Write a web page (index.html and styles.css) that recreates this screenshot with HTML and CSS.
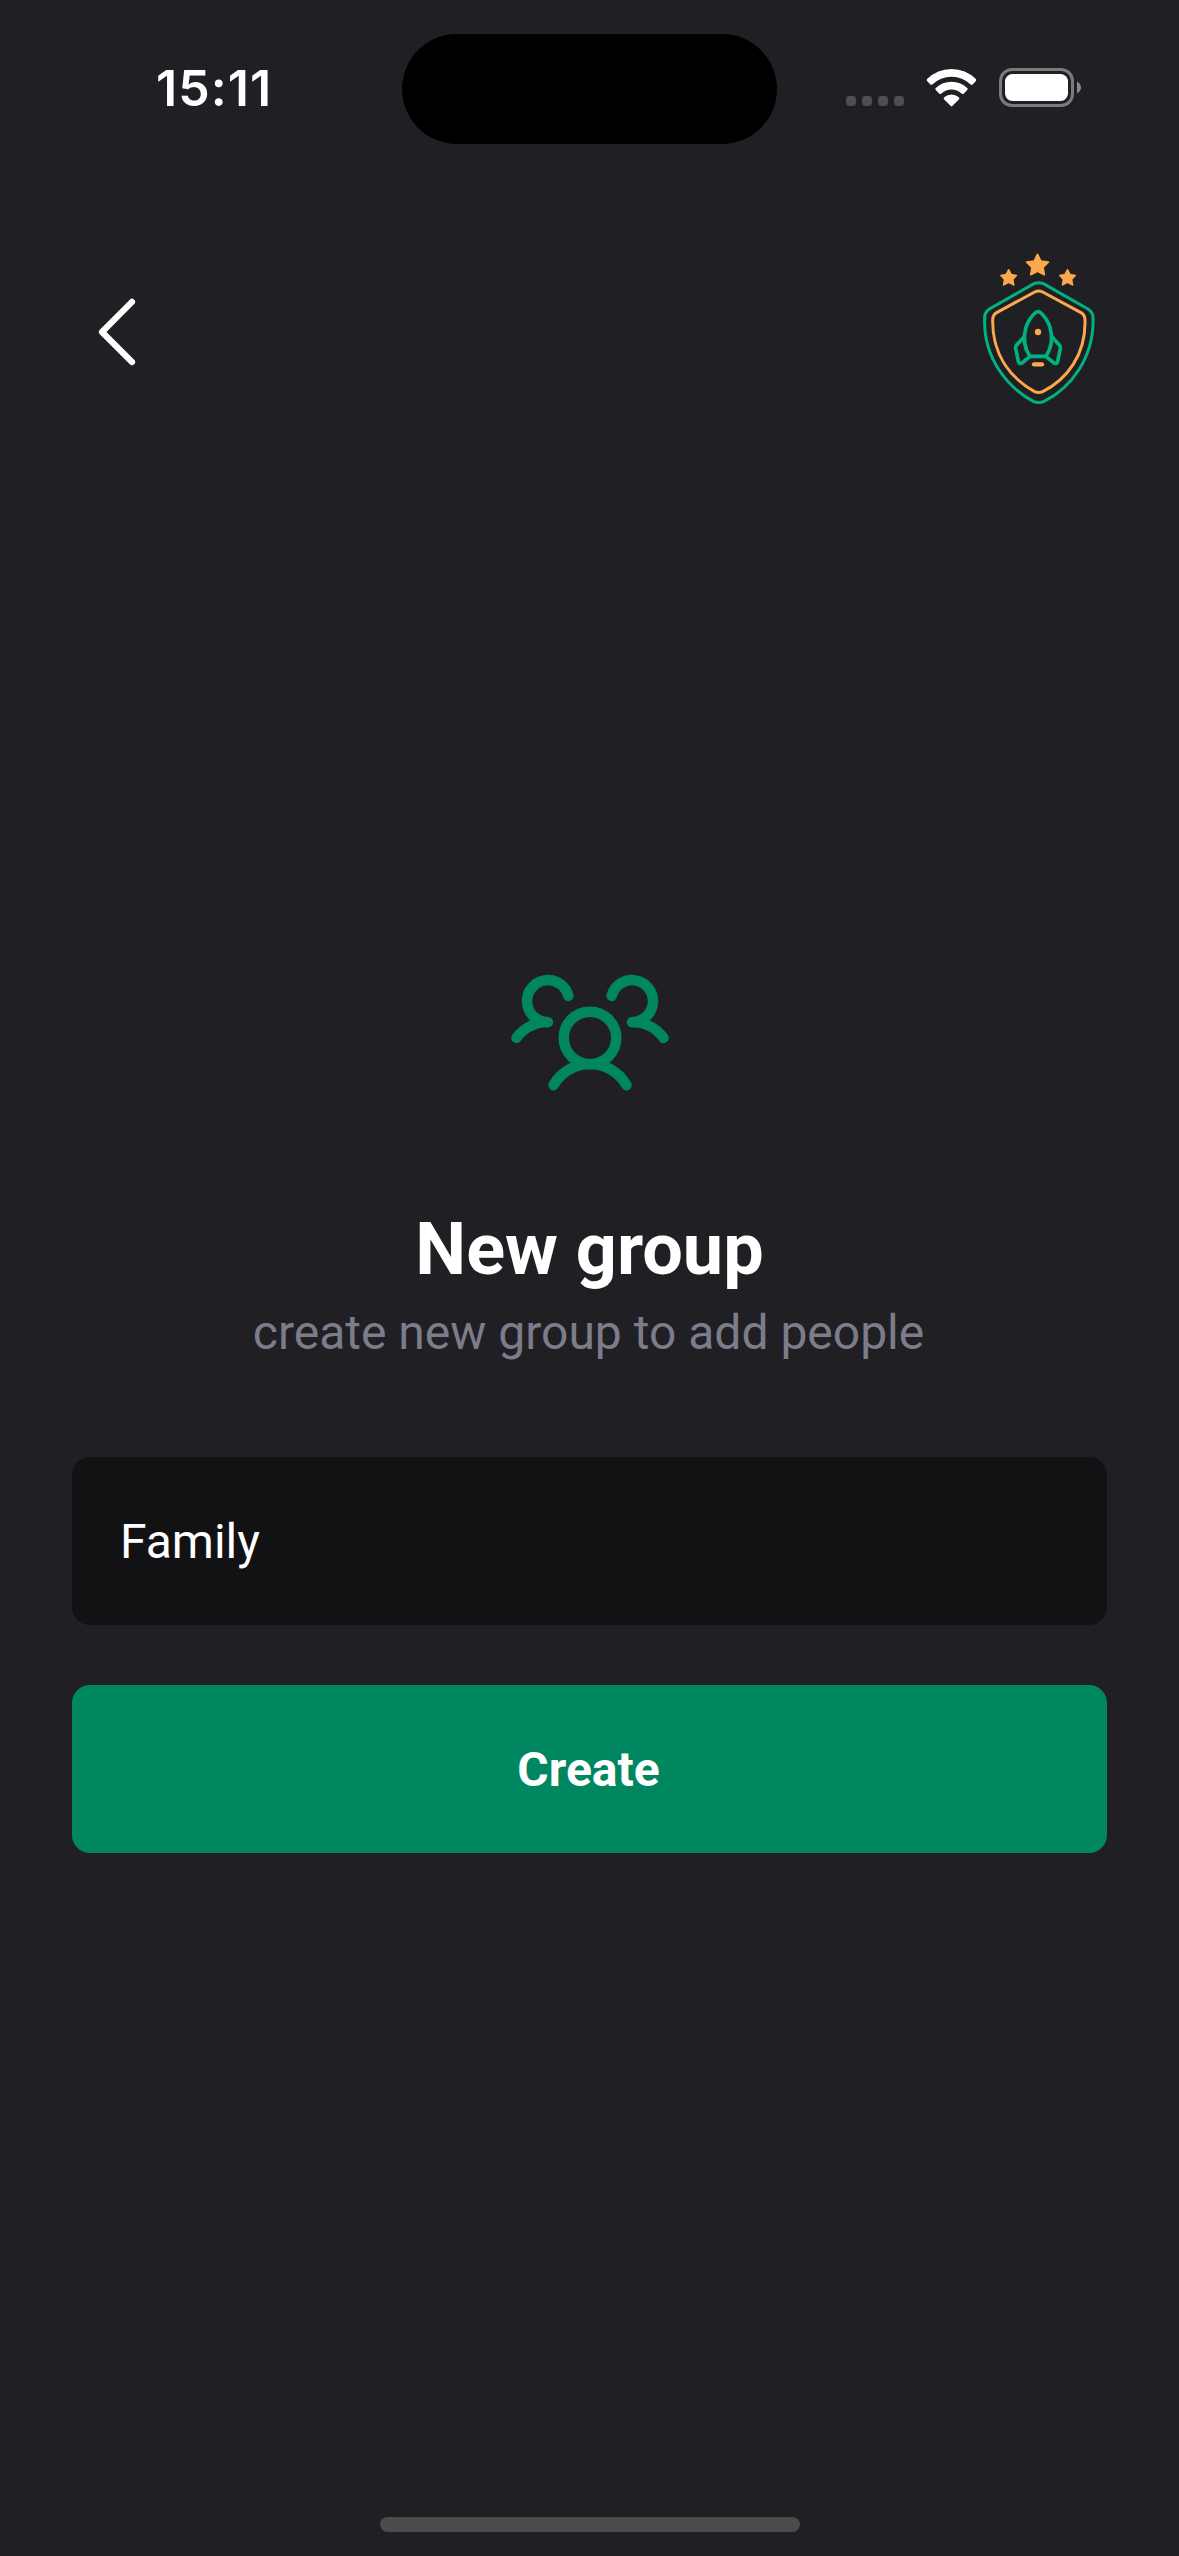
FILE: index.html
```html
<!DOCTYPE html>
<html lang="en">
<head>
<meta charset="utf-8">
<title>New group</title>
<link rel="stylesheet" href="styles.css">
</head>
<body>
<div class="screen">
  <div class="status">
    <div class="status-time">15:11</div>
    <div class="island"></div>
    <div class="status-icons">
      <svg class="signal" viewBox="0 0 58 10" fill="#4e4e50"><rect width="10" height="10" rx="3.4"/><rect x="16" width="10" height="10" rx="3.4"/><rect x="32" width="10" height="10" rx="3.4"/><rect x="48" width="10" height="10" rx="3.4"/></svg>
      <svg class="wifi" viewBox="0 0 150 112" fill="#fff"><path d="M2 30Q0 33 2 36L12 46Q15 48 18 46Q42 23 75 23Q108 23 132 46Q135 48 138 46L148 36Q150 33 148 30Q117 0 75 0Q33 0 2 30Z"/><path d="M28 57Q25 60 28 63L38 73Q41 76 45 73Q58 61 75 61Q92 61 105 73Q109 76 112 73L122 63Q125 60 122 57Q102 38 75 38Q48 38 28 57Z"/><path d="M53 84Q50 88 53 91L72 110Q75 113 78 110L97 91Q100 88 97 84Q87 76 75 76Q63 76 53 84Z"/></svg>
      <svg class="battery" viewBox="0 0 83 39"><rect x="1.5" y="1.5" width="72" height="36" rx="11.5" fill="none" stroke="#7b7b7e" stroke-width="3"/><rect x="6" y="6" width="63" height="27" rx="7.5" fill="#fff"/><path d="M78 13.5Q82 16 82 19.5Q82 23 78 25.5Z" fill="#8a8a8c"/></svg>
    </div>
  </div>
  <header class="header">
    <svg class="back" viewBox="0 0 80 100" fill="none" stroke="#fff" stroke-width="6.2" stroke-linecap="round" stroke-linejoin="round"><path d="M52 21.9L22 52L52 82"/></svg>
    <svg class="logo" viewBox="0 0 480 540" fill="none" stroke-linecap="round" stroke-linejoin="round">
      <g fill="#fba94c" stroke="#fba94c" stroke-width="5">
        <path d="M232.500 43L242.500 63L265 66.500L249 82.500L253 104L232.500 94L212.500 104L216 82.500L200 66.500L222.500 63Z"/>
        <path d="M146 89.500L153.500 104L169 106.500L158 118L161 134.500L146 127L131 134.500L134 118L123 106.500L138.500 104Z"/>
        <path d="M322.500 89.500L330 104L345.500 106.500L334.500 118L337.500 134.500L322.500 127L307.500 134.500L310.500 118L299.500 106.500L315 104Z"/>
      </g>
      <path stroke="#00b37e" stroke-width="9" d="M222 131Q236 125 250 131L384 207Q399 216 399 233C403 355 330 446 252 484Q236 491 220 484C142 442 69 353 74 233Q74 216 88 207Z"/>
      <path stroke="#fba94c" stroke-width="9" d="M224 156Q236 150 248 156L363 218Q375 225 375 240C378 345 320 418 248 455Q236 460 224 455C152 414 97 345 98 240Q98 225 110 218Z"/>
      <g stroke="#00b37e" stroke-width="11">
        <path d="M209 349C191 320 190 289 198 262Q206 237 225 219Q234 211 243 219Q262 237 270 262C278 289 277 320 258 349Z"/>
        <path d="M192 291L170 315Q166 319 167 325L175 364Q178 373 186 369L209 350M276 291L298 315Q302 319 301 325L293 364Q290 373 282 369L258 350"/>
      </g>
      <circle cx="234" cy="276" r="9.500" fill="#fba94c"/>
      <path stroke="#fba94c" stroke-width="13" d="M222 373H246"/>
    </svg>
  </header>
  <main class="content">
    <svg class="group-icon" viewBox="0 0 256 256" fill="none" stroke="#00875f" stroke-width="16" stroke-linecap="round" stroke-linejoin="round"><circle cx="128" cy="140" r="40"/><path d="M192 116A59.800 59.800 0 0 1 240 140M16 140A59.800 59.800 0 0 1 64 116M72.400 212A64.100 64.100 0 0 1 183.600 212M64 116A32 32 0 1 1 95 76M161 76A32 32 0 1 1 192 116"/></svg>
    <h1 class="title">New group</h1>
    <p class="subtitle">create new group to add people</p>
    <input class="field" type="text" value="Family" aria-label="Group name">
    <button class="submit" type="button">Create</button>
  </main>
  <div class="home-bar"></div>
</div>
</body>
</html>
```
FILE: styles.css
```css
* {
  box-sizing: border-box;
}

body {
  margin: 0;
  background: #202024;
  color: #fff;
  font-family: Roboto, sans-serif;
}

.screen {
  display: flex;
  flex-direction: column;
  width: 1179px;
  height: 2556px;
  padding-bottom: 24px;
  overflow: hidden;
}

.status {
  display: grid;
  grid-template-columns: 402px 375px 402px;
  height: 240px;
  padding-top: 34px;
}

.status-time {
  padding-left: 156px;
  font: 600 50px/108px Inter, sans-serif;
  letter-spacing: 1.1px;
}

.island {
  height: 110px;
  border-radius: 55px;
  background: #000;
}

.status-icons {
  display: flex;
  align-items: flex-start;
  padding: 34px 0 0 69px;
}

.signal {
  width: 58px;
  height: 10px;
  margin: 28px 22px 0 0;
}

.wifi {
  width: 51px;
  height: 37.500px;
  margin: 1px 22px 0 0;
}

.battery {
  width: 83px;
  height: 39px;
}

.header {
  display: flex;
  justify-content: space-between;
  height: 180px;
  padding: 0 59px 0 80px;
}

.back {
  width: 80px;
  height: 100px;
  margin-top: 40px;
}

.logo {
  width: 160px;
  height: 180px;
}

.content {
  display: flex;
  flex-direction: column;
  align-items: center;
  padding: 526px 72px 0;
}

.group-icon {
  width: 168px;
  height: 168px;
}

.title {
  margin: 94px 0 0;
  font-size: 72px;
  line-height: 84px;
}

.subtitle {
  margin: 4px 2px 0 0;
  color: #7c7c8a;
  font-size: 48px;
  line-height: 74px;
}

.field,
.submit {
  width: 100%;
  height: 168px;
  border: 0;
  border-radius: 18px;
  color: #fff;
  font-family: inherit;
  font-size: 48px;
}

.field {
  margin: 87px 0 60px;
  padding: 0 48px;
  background: #121214;
}

.submit {
  padding: 0 2px 0 0;
  background: #00875f;
  font-weight: 700;
}

.home-bar {
  width: 420px;
  height: 15px;
  margin: auto auto 0;
  border-radius: 8px;
  background: #4b4b4b;
}
```
